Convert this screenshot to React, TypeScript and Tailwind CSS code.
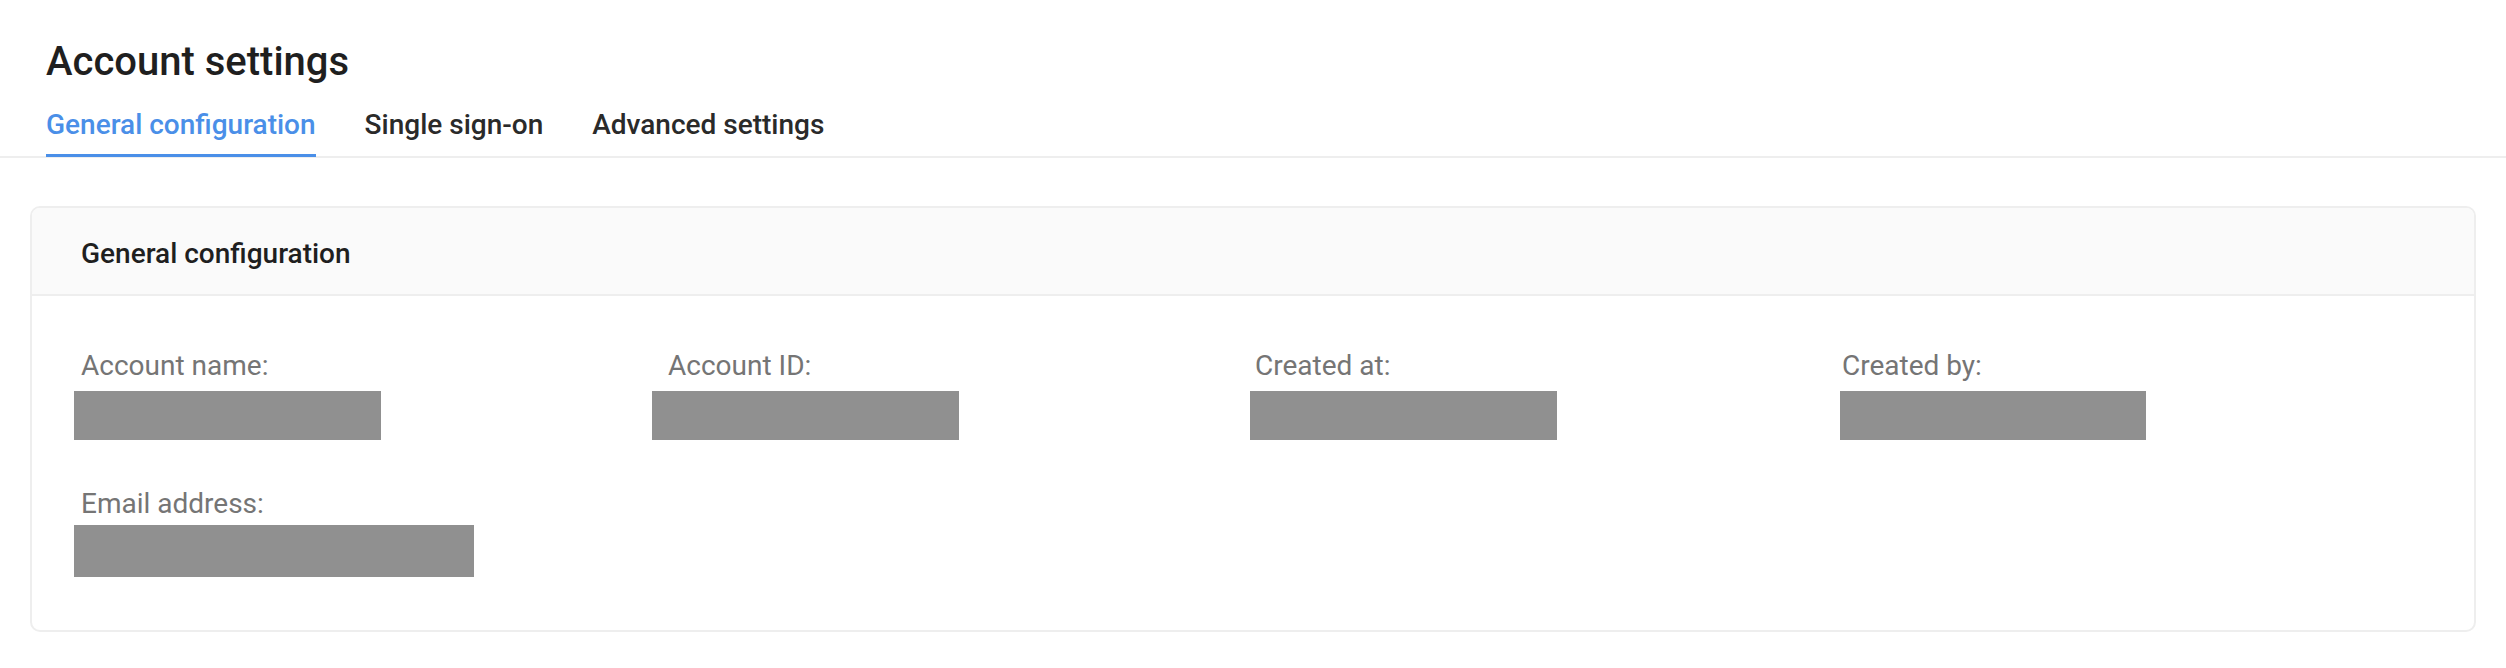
import React from "react";

type Field = {
  label: string;
  barWidth: number;
  barHeight: number;
  offset: string;
};

const rowOne: Field[] = [
  { label: "Account name:", barWidth: 307, barHeight: 49, offset: "ml-[-7px]" },
  { label: "Account ID:", barWidth: 307, barHeight: 49, offset: "ml-[-16px]" },
  { label: "Created at:", barWidth: 307, barHeight: 49, offset: "ml-[-5px]" },
  { label: "Created by:", barWidth: 306, barHeight: 49, offset: "ml-[-2px]" },
];

const tabs = ["General configuration", "Single sign-on", "Advanced settings"];

const Redacted = ({ w, h, className }: { w: number; h: number; className: string }) => (
  <div className={`bg-[#909090] ${className}`} style={{ width: w, height: h }} />
);

export default function App() {
  return (
    <div className="min-h-[668px] w-full bg-white font-['Roboto',sans-serif]">
      {/* Page header */}
      <div className="pt-[39px]">
        <h1 className="pl-[46px] text-[40px] leading-[46px] font-medium text-[#1f1f1f]">
          Account settings
        </h1>
        <div className="mt-[24px] flex gap-[49px] border-b-2 border-[#eeeeee] pl-[46px]">
          {tabs.map((tab, i) => (
            <button
              key={tab}
              className={`-mb-[1px] pb-[13px] text-[28px] leading-[32px] font-medium border-b-[3px] ${
                i === 0
                  ? "border-[#4a8fe8] text-[#4a8fe8]"
                  : "border-transparent text-[#2a2a2a]"
              }`}
            >
              {tab}
            </button>
          ))}
        </div>
      </div>

      {/* Card */}
      <div className="mx-[30px] mt-[48px] rounded-[10px] border-2 border-[#eeeeee] overflow-hidden">
        <div className="bg-[#fafafa] border-b-2 border-[#eeeeee] pl-[49px] pt-[30px] pb-[24px]">
          <h2 className="text-[28px] leading-[32px] font-medium text-[#1f1f1f]">
            General configuration
          </h2>
        </div>

        <div className="pl-[49px] pt-[54px] pb-[53px]">
          <div className="grid grid-cols-[repeat(4,587px)]">
            {rowOne.map((f) => (
              <div key={f.label} className="flex flex-col">
                <span className="text-[28px] leading-[32px] text-[#757575]">{f.label}</span>
                <Redacted w={f.barWidth} h={f.barHeight} className={`mt-[9px] ${f.offset}`} />
              </div>
            ))}
          </div>

          <div className="mt-[48px] flex flex-col">
            <span className="text-[28px] leading-[32px] text-[#757575]">Email address:</span>
            <Redacted w={400} h={52} className="mt-[5px] ml-[-7px]" />
          </div>
        </div>
      </div>
    </div>
  );
}
